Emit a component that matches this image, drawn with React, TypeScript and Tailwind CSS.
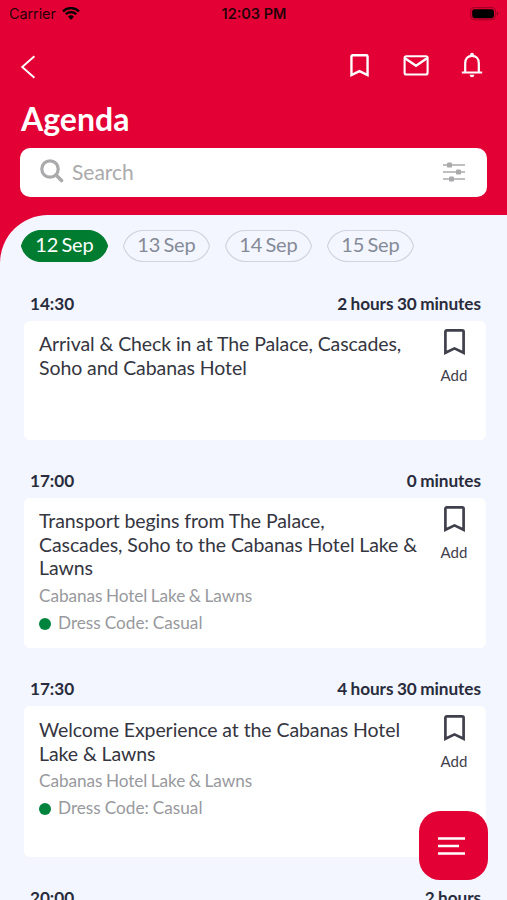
import clsx from "clsx";

type Session = {
  time: string;
  duration: string;
  title: string;
  venue?: string;
  dressCode?: string;
  size: string;
};

const DAYS = ["12 Sep", "13 Sep", "14 Sep", "15 Sep"];

const SESSIONS: Session[] = [
  {
    time: "14:30",
    duration: "2 hours 30 minutes",
    title: "Arrival & Check in at The Palace, Cascades,\nSoho and Cabanas Hotel",
    size: "h-[119px] pt-[11px]",
  },
  {
    time: "17:00",
    duration: "0 minutes",
    title: "Transport begins from The Palace,\nCascades, Soho to the Cabanas Hotel Lake &\nLawns",
    venue: "Cabanas Hotel Lake & Lawns",
    dressCode: "Dress Code: Casual",
    size: "h-[150px] pt-[11px]",
  },
  {
    time: "17:30",
    duration: "4 hours 30 minutes",
    title: "Welcome Experience at the Cabanas Hotel\nLake & Lawns",
    venue: "Cabanas Hotel Lake & Lawns",
    dressCode: "Dress Code: Casual",
    size: "h-[151px] pt-3",
  },
  {
    time: "20:00",
    duration: "2 hours",
    title: "",
    size: "h-[119px] pt-[11px]",
  },
];

function BookmarkIcon({ className }: { className?: string }) {
  return (
    <svg viewBox="0 0 21 26" fill="none" className={className} aria-hidden="true">
      <path
        d="M1.4 23.8V2.8a1.4 1.4 0 0 1 1.4-1.4h15.4a1.4 1.4 0 0 1 1.4 1.4v21l-9.1-4.4z"
        stroke="currentColor"
        strokeWidth="2.7"
      />
    </svg>
  );
}

function StatusBar() {
  return (
    <div className="grid h-7 grid-cols-3 items-center pr-2 pl-[9px] font-['Inter'] text-[14.5px] text-black/85">
      <div className="flex items-center gap-1.5">
        <span className="tracking-[-0.1px]">Carrier</span>
        <svg viewBox="0 0 18 13" className="mb-0.5 h-[13px] w-[18px]" aria-hidden="true">
          <path d="M9 12.8 6 9.7a4.4 4.4 0 0 1 6 0z" fill="#000" />
          <path d="M3.7 7.2a7.6 7.6 0 0 1 10.6 0M1 4.3a11.5 11.5 0 0 1 16 0" fill="none" stroke="#000" strokeWidth="2.3" />
        </svg>
      </div>
      <span className="text-center font-semibold whitespace-nowrap">12:03 PM</span>
      <svg viewBox="0 0 29 14" className="h-3.5 w-[29px] justify-self-end" aria-hidden="true">
        <rect x=".6" y=".6" width="25" height="12.2" rx="4" fill="none" stroke="#000" strokeOpacity=".3" />
        <rect x="2.2" y="2.2" width="21.8" height="9" rx="2.4" fill="#000" />
        <path d="M27 4.8c1.8.7 1.8 3.2 0 3.9z" fill="#000" fillOpacity=".4" />
      </svg>
    </div>
  );
}

function Header() {
  return (
    <header className="flex h-[215px] flex-col text-white">
      <StatusBar />

      <div className="flex h-[72px] items-center justify-between pr-6 pl-5">
        <svg viewBox="0 0 16 24" fill="none" className="mt-1.5 h-6 w-4" aria-label="Back">
          <path d="M14.4 1.3 2.2 12l12.2 10.8" stroke="currentColor" strokeWidth="1.9" />
        </svg>
        <div className="mt-0.5 flex items-center">
          <BookmarkIcon className="h-[23px] w-[19px]" />
          <svg viewBox="0 0 26 21" fill="none" className="ml-[34px] h-[21px] w-[26px]" aria-label="Messages">
            <rect x="1.6" y="1.3" width="23" height="18.2" rx="1.8" stroke="currentColor" strokeWidth="2.1" />
            <path d="m2 3.2 11 7.6 11-7.6" stroke="currentColor" strokeWidth="2.3" />
          </svg>
          <svg viewBox="0 0 22 26" fill="none" className="ml-8 h-[26px] w-[22px]" aria-label="Notifications">
            <path d="M4.2 20.4v-9.2C4.2 6.6 7 3.9 11 3.9s6.8 2.7 6.8 7.3v9.2" stroke="currentColor" strokeWidth="2.2" />
            <path d="M.8 20.5h20.4" stroke="currentColor" strokeWidth="2" />
            <circle cx="11" cy="2.6" r="1.9" fill="currentColor" />
            <path d="M8.6 22.8h4.8a2.4 2.4 0 0 1-4.8 0z" fill="currentColor" />
          </svg>
        </div>
      </div>

      <h1 className="flex h-[48px] items-center pb-2.5 pl-[21px] text-[32px] leading-none font-bold">Agenda</h1>

      <div className="mx-5 flex h-[49px] items-center rounded-[10px] bg-white pr-[22px] pl-5 text-[#aaaaac]">
        <svg viewBox="0 0 24 24" fill="none" className="mb-1 h-6 w-6" aria-hidden="true">
          <circle cx="10" cy="10" r="8.2" stroke="currentColor" strokeWidth="3.2" />
          <path d="m16 16 5.5 5.5" stroke="currentColor" strokeWidth="3.6" strokeLinecap="round" />
        </svg>
        <span className="mb-0.5 ml-2 flex-1 text-[21px]">Search</span>
        <svg viewBox="0 0 22 20" className="mb-0.5 h-5 w-[22px]" aria-label="Filter">
          <path d="M0 3h22M0 10h22M0 17h22" stroke="currentColor" strokeWidth="1.6" />
          <rect x="4" y=".4" width="5" height="5.2" rx="1.2" fill="currentColor" />
          <rect x="13" y="7.4" width="5" height="5.2" rx="1.2" fill="currentColor" />
          <rect x="6" y="14.4" width="5" height="5.2" rx="1.2" fill="currentColor" />
        </svg>
      </div>
    </header>
  );
}

function DayChip({ label, active }: { label: string; active: boolean }) {
  return (
    <button
      className={clsx(
        "relative flex h-8 w-[87px] items-center justify-center pb-1 text-[20px] leading-7 tracking-[-0.1px] [word-spacing:-2px]",
        active ? "text-white" : "text-[#858a97]",
      )}
    >
      <svg viewBox="0 0 87 32" className="absolute inset-0 h-8 w-[87px]" aria-hidden="true">
        <path
          d="M.5 16A20.5 20.5 0 0 1 20 .5h47A20.5 20.5 0 0 1 86.5 16A20.5 20.5 0 0 1 67 31.5H20A20.5 20.5 0 0 1 .5 16z"
          fill={active ? "#007c30" : "none"}
          stroke={active ? "#007c30" : "#d2d3e0"}
          strokeWidth="1.2"
        />
      </svg>
      <span className="relative">{label}</span>
    </button>
  );
}

function SessionItem({ session }: { session: Session }) {
  return (
    <section>
      <div className="flex h-[58px] items-end justify-between pr-[5px] pb-1.5 pl-1.5 text-[17.2px] leading-[22px] font-bold tracking-[-0.05px] text-[#292c3c] [word-spacing:-0.7px]">
        <span>{session.time}</span>
        <span>{session.duration}</span>
      </div>
      <div className={clsx("flex justify-between rounded-md bg-white pl-[15px]", session.size)}>
        <div className="w-[382px]">
          <h2 className="text-[19.5px] leading-[23.5px] tracking-[-0.09px] whitespace-pre-line text-[#35363f]">
            {session.title}
          </h2>
          {session.venue && (
            <p className="mt-[5px] text-[17.2px] leading-[22px] tracking-[-0.06px] text-[#98999d] [word-spacing:-0.8px]">
              {session.venue}
            </p>
          )}
          {session.dressCode && (
            <p className="mt-[5px] flex items-center gap-[7px] text-[17.2px] leading-[22px] text-[#98999d] [word-spacing:-0.4px]">
              <span className="mt-0.5 size-3 rounded-full bg-[#00843d]" />
              {session.dressCode}
            </p>
          )}
        </div>
        <button className="-mt-[3px] flex w-16 flex-col items-center self-start text-[15px] leading-[18px] text-[#3f404b]">
          <BookmarkIcon className="h-[26px] w-[21px]" />
          <span className="mt-[11px]">Add</span>
        </button>
      </div>
    </section>
  );
}

export default function App() {
  return (
    <div className="relative h-[900px] w-[507px] overflow-hidden bg-[#e20034] font-['Lato',sans-serif]">
      <Header />

      <main className="h-[685px] overflow-hidden rounded-tl-[48px] bg-[#f3f6ff]">
        <nav className="flex h-12 items-end gap-[15px] pb-px pl-[21px]">
          {DAYS.map((day, i) => (
            <DayChip key={day} label={day} active={i === 0} />
          ))}
        </nav>
        <div className="mr-[21px] ml-6">
          {SESSIONS.map((session) => (
            <SessionItem key={session.time} session={session} />
          ))}
        </div>
      </main>

      <button
        className="absolute right-[19px] bottom-5 flex size-[69px] items-center justify-center rounded-[21px] bg-[#e20034] text-white"
        aria-label="Menu"
      >
        <svg viewBox="0 0 27 20" className="mr-1 h-5 w-[27px]" aria-hidden="true">
          <path d="M0 2.5h27M0 10h21M0 17.5h27" stroke="currentColor" strokeWidth="2.4" />
        </svg>
      </button>
    </div>
  );
}
